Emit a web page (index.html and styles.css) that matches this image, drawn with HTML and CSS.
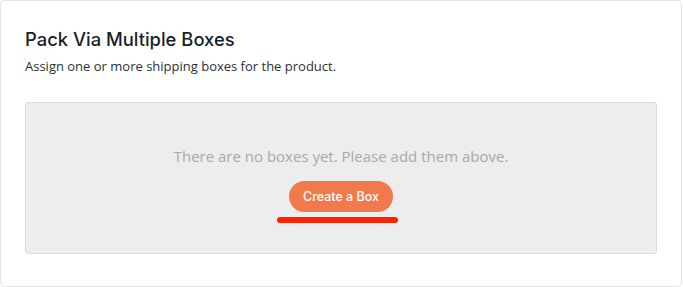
FILE: index.html
```html
<!DOCTYPE html>
<html>
<head>
<meta charset="utf-8">
<link rel="stylesheet" href="styles.css">
</head>
<body>
<div class="card">
  <h2 class="title">Pack Via Multiple Boxes</h2>
  <p class="subtitle">Assign one or more shipping boxes for the product.</p>
  <div class="empty">
    <p class="empty-text">There are no boxes yet. Please add them above.</p>
    <button class="btn">Create a Box</button>
    <span class="underline"></span>
  </div>
</div>
</body>
</html>
```
FILE: styles.css
```css
html, body {
  margin: 0;
  padding: 0;
  background: #ffffff;
}
body {
  font-family: "Open Sans", "Liberation Sans", sans-serif;
}
.card {
  box-sizing: border-box;
  width: 682px;
  height: 287px;
  border: 1px solid #e4e4e4;
  border-radius: 4px;
  padding: 26px 24px 0 24px;
  background: #fff;
}
.title {
  margin: 0;
  font-family: "Inter", "Open Sans", sans-serif;
  font-size: 18.4px;
  line-height: 24px;
  font-weight: 500;
  color: #1a1f2c;
}
.subtitle {
  margin: 6px 0 0 0;
  font-size: 13px;
  line-height: 18px;
  color: #2b2f38;
}
.empty {
  box-sizing: border-box;
  margin-top: 27px;
  height: 152px;
  background: #ededed;
  border: 1px solid #dcdcdc;
  border-radius: 3px;
  display: flex;
  flex-direction: column;
  align-items: center;
  padding-top: 43px;
}
.empty-text {
  margin: 0;
  font-size: 15px;
  line-height: 20px;
  color: #a9a9a9;
}
.btn {
  margin-top: 15px;
  width: 104px;
  height: 31px;
  border: none;
  border-radius: 16px;
  background: #f07a4b;
  color: #fff;
  font-family: "Inter", "Open Sans", sans-serif;
  font-size: 12.5px;
  font-weight: 500;
  padding: 0;
}
.underline {
  display: block;
  margin-top: 5px;
  margin-right: 7px;
  width: 121px;
  height: 6px;
  border-radius: 3px;
  background: #ff2200;
}
```
